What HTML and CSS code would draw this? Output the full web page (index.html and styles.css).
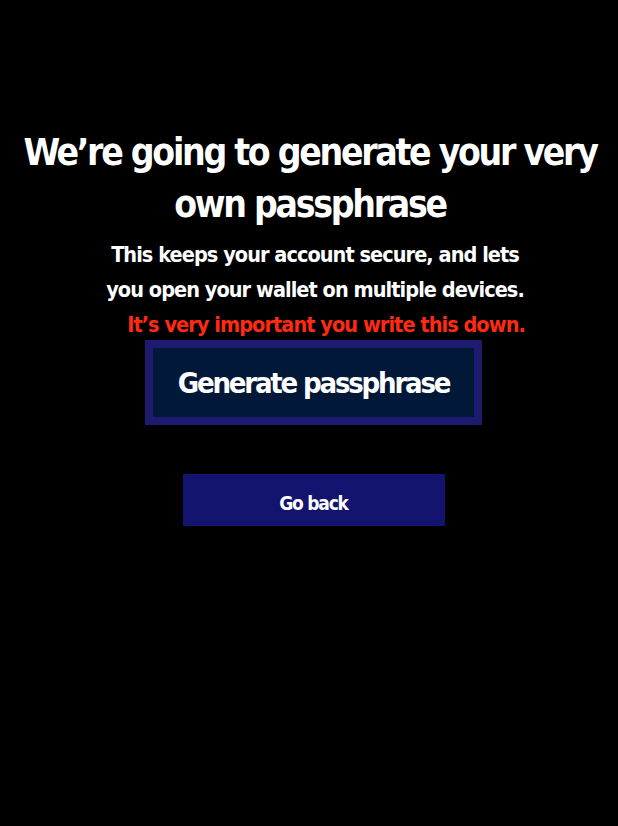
FILE: index.html
```html
<!DOCTYPE html>
<html>
<head>
<meta charset="utf-8">
<link rel="stylesheet" href="styles.css">
</head>
<body>
<main class="screen">
  <h1 class="title">We’re going to generate your very own passphrase</h1>
  <div class="intro">
    <p class="line">This keeps your account secure, and lets</p>
    <p class="line">you open your wallet on multiple devices.</p>
    <p class="line warn">It’s very important you write this down.</p>
  </div>
  <button class="btn-generate">Generate passphrase</button>
  <button class="btn-back">Go back</button>
</main>
</body>
</html>
```
FILE: styles.css
```css
html, body {
  margin: 0;
  padding: 0;
  background: #000;
}
.screen {
  width: 618px;
  height: 826px;
  display: flex;
  flex-direction: column;
  align-items: center;
  font-family: "DejaVu Sans", sans-serif;
  font-stretch: condensed;
  font-weight: bold;
  color: #fff;
}
.title {
  margin: 127px 0 0 2px;
  font-size: 37px;
  line-height: 52px;
  letter-spacing: -2.3px;
  text-align: center;
  width: 610px;
  font-weight: bold;
}
.intro {
  margin-top: 6px;
  padding-left: 12px;
  text-align: center;
}
.line {
  margin: 0;
  font-size: 21.5px;
  line-height: 35px;
  letter-spacing: -0.95px;
}
.warn {
  color: #ff2a12;
  padding-left: 22px;
}
.btn-generate {
  margin: -2px 0 0 9px;
  width: 337px;
  height: 85px;
  border: 8px solid #1c1b70;
  background: #021838;
  color: #fff;
  font-family: inherit;
  font-stretch: condensed;
  font-weight: bold;
  font-size: 29px;
  letter-spacing: -2.2px;
  padding: 0;
}
.btn-back {
  margin: 49px 0 0 9px;
  width: 262px;
  height: 52px;
  border: none;
  background: #12146f;
  color: #fff;
  font-family: inherit;
  font-stretch: condensed;
  font-weight: bold;
  font-size: 19px;
  letter-spacing: -1.2px;
  padding: 5px 0 0;
}
```
